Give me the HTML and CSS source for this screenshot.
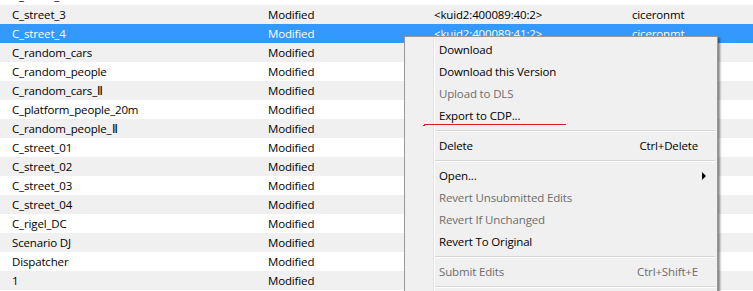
FILE: index.html
```html
<!DOCTYPE html>
<html lang="en">
<head>
  <meta charset="UTF-8" />
  <title>Assets</title>
  <link rel="stylesheet" href="styles.css">
</head>
<body>
  <div class="list">
    <div class="row"><span>C_street_2</span><span>Modified</span><span>&lt;kuid2:400089:39:2&gt;</span><span>ciceronmt</span></div>
    <div class="row alt"><span>C_street_3</span><span>Modified</span><span>&lt;kuid2:400089:40:2&gt;</span><span>ciceronmt</span></div>
    <div class="row selected"><span>C_street_4</span><span>Modified</span><span>&lt;kuid2:400089:41:2&gt;</span><span>ciceronmt</span></div>
    <div class="row alt"><span>C_random_cars</span><span>Modified</span><span></span><span></span></div>
    <div class="row"><span>C_random_people</span><span>Modified</span><span></span><span></span></div>
    <div class="row alt"><span>C_random_cars_&#8545;</span><span>Modified</span><span></span><span></span></div>
    <div class="row"><span>C_platform_people_20m</span><span>Modified</span><span></span><span></span></div>
    <div class="row alt"><span>C_random_people_&#8545;</span><span>Modified</span><span></span><span></span></div>
    <div class="row"><span>C_street_01</span><span>Modified</span><span></span><span></span></div>
    <div class="row alt"><span>C_street_02</span><span>Modified</span><span></span><span></span></div>
    <div class="row"><span>C_street_03</span><span>Modified</span><span></span><span></span></div>
    <div class="row alt"><span>C_street_04</span><span>Modified</span><span></span><span></span></div>
    <div class="row"><span>C_rigel_DC</span><span>Modified</span><span></span><span></span></div>
    <div class="row alt"><span>Scenario DJ</span><span>Modified</span><span></span><span></span></div>
    <div class="row"><span>Dispatcher</span><span>Modified</span><span></span><span></span></div>
    <div class="row alt"><span>1</span><span>Modified</span><span></span><span></span></div>
  </div>

  <!-- context menu over the list -->
  <div class="menu">
    <div class="item">Download</div>
    <div class="item">Download this Version</div>
    <div class="item disabled">Upload to DLS</div>
    <div class="item marked">Export to CDP...</div>
    <div class="sep"></div>
    <div class="item"><span>Delete</span><span class="key">Ctrl+Delete</span></div>
    <div class="sep"></div>
    <div class="item sub">Open...</div>
    <div class="item disabled">Revert Unsubmitted Edits</div>
    <div class="item disabled">Revert If Unchanged</div>
    <div class="item">Revert To Original</div>
    <div class="sep"></div>
    <div class="item disabled"><span>Submit Edits</span><span class="key">Ctrl+Shift+E</span></div>
    <div class="sep"></div>
    <div class="item">Properties</div>
  </div>
</body>
</html>
```

FILE: styles.css
```css
body {
  margin: 0;
  width: 753px;
  height: 291px;
  overflow: hidden;
  position: relative;
  background: #ffffff;
  font-family: "Open Sans", "Noto Sans", sans-serif;
  font-size: 11.5px;
  letter-spacing: -0.15px;
  color: #000000;
}
.list {
  margin-top: -14px;
}
.row {
  display: grid;
  grid-template-columns: 256px 166px 198px 1fr;
  height: 19px;
  line-height: 19px;
  padding-left: 12px;
  white-space: nowrap;
}
.row.alt {
  background: #f0f0f0;
}
.row.selected {
  background: #3399ff;
  color: #ffffff;
}

/* Context menu */
.menu {
  position: absolute;
  left: 404px;
  top: 36px;
  width: 312px;
  padding: 2px 0;
  background: #f0f0f0;
  border: 1px solid #979797;
  box-shadow: 2px 2px 2px rgba(0, 0, 0, 0.45);
}
.menu::before {
  content: "";
  position: absolute;
  left: 28px;
  top: 2px;
  bottom: 2px;
  width: 1px;
  background: #e2e3e3;
  border-right: 1px solid #ffffff;
}
.item {
  position: relative;
  display: flex;
  justify-content: space-between;
  height: 22px;
  line-height: 22px;
  padding: 0 19px 0 34px;
}
.item.disabled {
  color: #6d6d6d;
}
.item.sub::after {
  content: "";
  position: absolute;
  right: 11px;
  top: 7px;
  border-left: 4px solid #000000;
  border-top: 4px solid transparent;
  border-bottom: 4px solid transparent;
}
/* hand-drawn red underline */
.item.marked::after {
  content: "";
  position: absolute;
  left: 19px;
  right: 151px;
  bottom: 2px;
  height: 1px;
  background: #d42020;
}
.item.marked::before {
  content: "";
  position: absolute;
  left: 18px;
  bottom: 1px;
  width: 2px;
  height: 1px;
  background: #d42020;
}
.sep {
  position: relative;
  height: 8px;
  margin-left: 30px;
  margin-right: 2px;
}
.sep::before {
  content: "";
  position: absolute;
  left: 0;
  right: 0;
  top: 3px;
  height: 1px;
  background: #d7d7d7;
  border-bottom: 1px solid #ffffff;
}
```
